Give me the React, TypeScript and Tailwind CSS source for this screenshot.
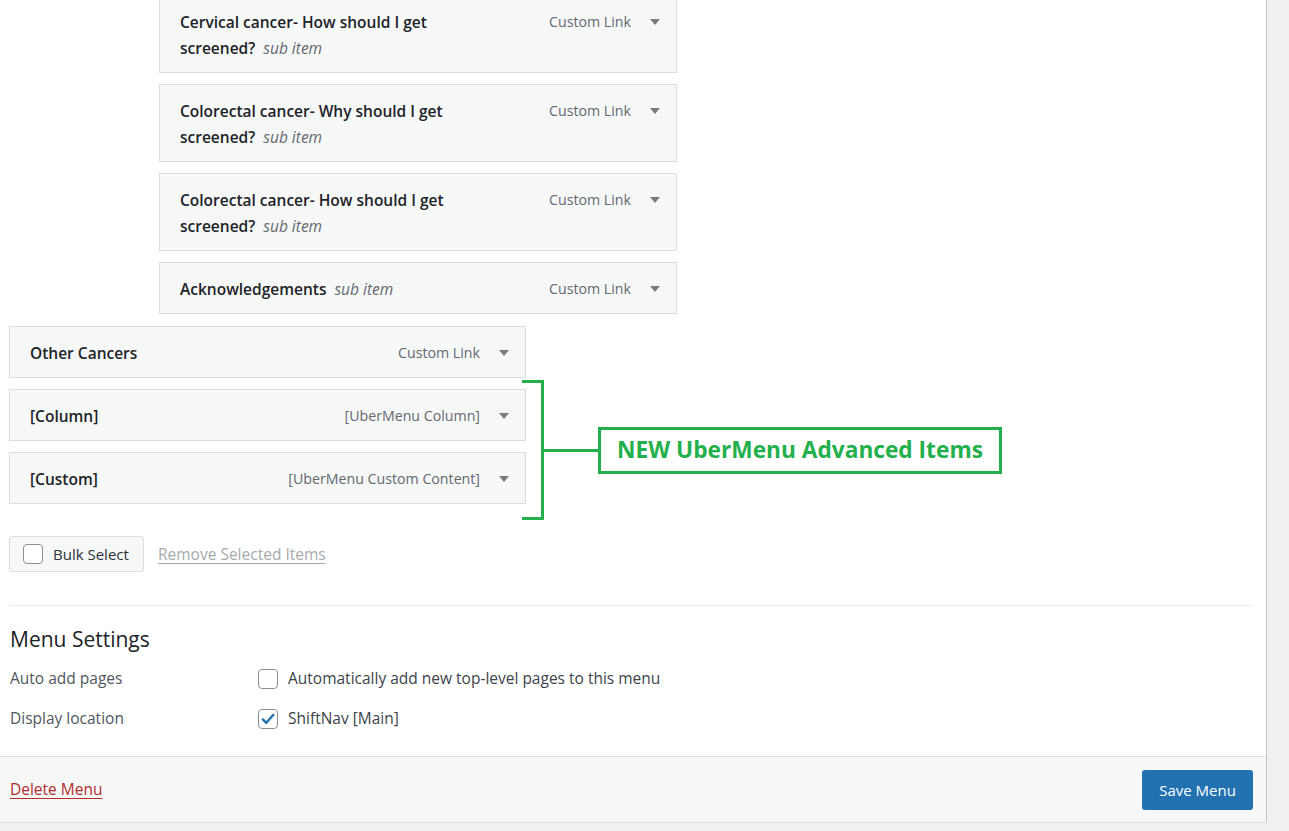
import React from "react";

type Item = {
  title: string[];
  sub?: boolean;
  type: string;
};

const SUB_ITEMS: Item[] = [
  { title: ["Cervical cancer- How should I get", "screened?"], sub: true, type: "Custom Link" },
  { title: ["Colorectal cancer- Why should I get", "screened?"], sub: true, type: "Custom Link" },
  { title: ["Colorectal cancer- How should I get", "screened?"], sub: true, type: "Custom Link" },
  { title: ["Acknowledgements"], sub: true, type: "Custom Link" },
];

const TOP_ITEMS: Item[] = [
  { title: ["Other Cancers"], type: "Custom Link" },
  { title: ["[Column]"], type: "[UberMenu Column]" },
  { title: ["[Custom]"], type: "[UberMenu Custom Content]" },
];

const FONT = "font-['Segoe_UI','Open_Sans','Noto_Sans',sans-serif]";

function Arrow() {
  return (
    <svg aria-hidden="true" className="mt-[10px] h-[6px] w-[10px] shrink-0" viewBox="0 0 10 6">
      <path d="M0 0h10L5 6z" fill="#787c82" />
    </svg>
  );
}

function MenuItem({ item, width }: { item: Item; width: string }) {
  const last = item.title.length - 1;
  return (
    <div className={`flex items-start border border-[#dcdcde] bg-[#f6f7f7] pl-[20px] pr-[16px] pt-[13px] pb-[11px] ${width}`}>
      <div className="min-w-0 flex-1 text-[15.5px] font-semibold leading-[26px] text-[#1d2327]">
        {item.title.map((line, i) => (
          <div key={i}>
            {line}
            {i === last && item.sub ? (
              <span className="ml-[8px] font-normal italic text-[#646970]">sub item</span>
            ) : null}
          </div>
        ))}
      </div>
      <span className="mr-[19px] text-[14.2px] leading-[26px] text-[#646970]">{item.type}</span>
      <Arrow />
    </div>
  );
}

function Checkbox({ checked = false }: { checked?: boolean }) {
  return (
    <span className="inline-flex h-[20px] w-[20px] shrink-0 items-center justify-center rounded-[4px] border border-[#8c8f94] bg-white">
      {checked ? (
        <svg aria-hidden="true" className="h-[16px] w-[16px]" viewBox="0 0 16 16">
          <path d="M2.8 8.4 6.3 11.8 13.4 3.8" fill="none" stroke="#2271b1" strokeLinecap="round" strokeLinejoin="round" strokeWidth="2.4" />
        </svg>
      ) : null}
    </span>
  );
}

export default function App() {
  return (
    <div className={`relative h-[831px] w-[1289px] overflow-hidden bg-[#f0f0f1] ${FONT}`}>
      <div className="flex w-[1267px] flex-col border-r border-[#c3c4c7] bg-white">
        <div className="pl-[9px] pr-[14px]">
          <div className="mt-[-5px] ml-[150px] flex flex-col gap-[11px]">
            {SUB_ITEMS.map((item, i) => (
              <MenuItem item={item} key={i} width="w-[518px]" />
            ))}
          </div>

          <div className="mt-[12px] flex flex-col gap-[11px]">
            {TOP_ITEMS.map((item, i) => (
              <MenuItem item={item} key={i} width="w-[517px]" />
            ))}
          </div>

          <div className="mt-[32px] flex items-center gap-[14px]">
            <div className="flex h-[36px] w-[135px] items-center gap-[10px] rounded-[3px] border border-[#dcdcde] bg-[#f6f7f7] pl-[13px]">
              <Checkbox />
              <span className="text-[15px] text-[#2c3338]">Bulk Select</span>
            </div>
            <span className="mt-[2px] text-[15.5px] text-[#a7aaad] underline underline-offset-[3px]">Remove Selected Items</span>
          </div>

          <div className="mt-[33px] h-px bg-[#f0f0f1]" />

          <h3 className="mt-[19px] pl-px text-[21px] font-medium leading-[28px] text-[#1d2327]">Menu Settings</h3>

          <div className="mt-[6px] flex h-[40px] items-center">
            <span className="w-[249px] pl-px text-[15.5px] text-[#50575e]">Auto add pages</span>
            <Checkbox />
            <span className="ml-[10px] text-[15.5px] text-[#3c434a]">Automatically add new top-level pages to this menu</span>
          </div>
          <div className="flex h-[40px] items-center">
            <span className="w-[249px] pl-px text-[15.5px] text-[#50575e]">Display location</span>
            <Checkbox checked />
            <span className="ml-[10px] text-[15.5px] text-[#3c434a]">ShiftNav [Main]</span>
          </div>
        </div>

        <div className="mt-[17px] flex items-center justify-between border-y border-[#dcdcde] bg-[#f6f7f7] pb-[12px] pl-[10px] pr-[13px] pt-[13px]">
          <span className="text-[15.5px] text-[#b32d2e] underline underline-offset-[3px]">Delete Menu</span>
          <button className="h-[40px] w-[111px] rounded-[3px] bg-[#2271b1] text-[15px] text-white" type="button">
            Save Menu
          </button>
        </div>
      </div>

      {/* annotation overlay */}
      <div className="absolute left-[522px] top-[380px] h-[140px] w-[22px] border-y-[3px] border-r-[3px] border-[#23b04c]" />
      <div className="absolute left-[543px] top-[449px] h-[3px] w-[57px] bg-[#23b04c]" />
      <div className="absolute left-[598px] top-[427px] flex h-[47px] w-[404px] items-center justify-center border-[3px] border-[#23b04c] bg-white">
        <span className="text-[22.7px] font-bold text-[#23b04c]">NEW UberMenu Advanced Items</span>
      </div>
    </div>
  );
}
